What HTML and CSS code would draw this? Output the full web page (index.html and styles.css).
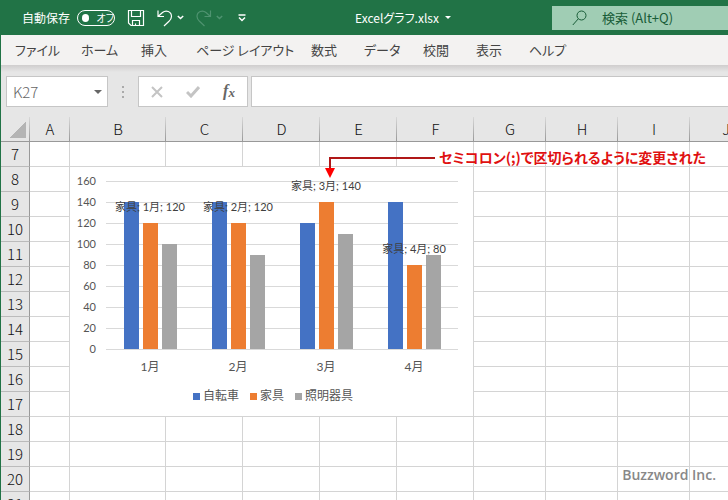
FILE: index.html
```html
<!DOCTYPE html>
<html lang="ja">
<head>
  <meta charset="UTF-8">
  <title>Excelグラフ.xlsx</title>
  <link rel="stylesheet" href="styles.css">
</head>
<body>
  <header class="titlebar">
    <label class="autosave">自動保存
      <span class="toggle"><input type="checkbox"><span class="knob"></span><span class="state">オフ</span></span>
    </label>
    <div class="quick">
      <button aria-label="上書き保存">
        <svg width="18" height="18" viewBox="0 0 18 18"><path d="M1.5 1.5h15v15H4L1.500 14zM4.500 1.500v6h9v-6M5.500 16.500v-5h7v5M8.500 16.500v-2"/></svg>
      </button>
      <button aria-label="元に戻す">
        <svg width="16" height="18" viewBox="0 0 16 18"><path d="M1 1.500v6h6M1 7.500L5.500 3.500C9 .5 14.500 2.500 14.500 7.500c0 2-1 3.300-2.500 4.800L7 17"/></svg>
        <svg class="chev" width="7" height="5" viewBox="0 0 7 5"><path d="M.8 1l2.700 2.500L6.200 1"/></svg>
      </button>
      <button class="off" aria-label="やり直し" disabled>
        <svg width="16" height="18" viewBox="0 0 16 18"><path d="M14.500 1.500v6h-6M14.500 7.500L10 3.500C6.500 .5 1 2.500 1 7.500c0 2 1 3.300 2.500 4.800L8.500 17"/></svg>
        <svg class="chev" width="7" height="5" viewBox="0 0 7 5"><path d="M.8 1l2.700 2.500L6.200 1"/></svg>
      </button>
      <button aria-label="カスタマイズ">
        <svg class="chev" width="8" height="8" viewBox="0 0 8 8"><path d="M.5 1h7M1 3.500l3 3 3-3"/></svg>
      </button>
    </div>
    <button class="filename">Excelグラフ.xlsx <span class="caret"></span></button>
    <div class="search">
      <svg width="15" height="16" viewBox="0 0 15 16"><circle cx="9.500" cy="5.500" r="4.500"/><path d="M6.300 8.800L.8 15"/></svg>
      <input type="text" placeholder="検索 (Alt+Q)" aria-label="検索">
    </div>
  </header>

  <nav class="tabs">
    <a href="#">ファイル</a>
    <a href="#">ホーム</a>
    <a href="#">挿入</a>
    <a href="#">ページ レイアウト</a>
    <a href="#">数式</a>
    <a href="#">データ</a>
    <a href="#">校閲</a>
    <a href="#">表示</a>
    <a href="#">ヘルプ</a>
  </nav>

  <div class="formulabar">
    <div class="namebox">
      <input type="text" value="K27" aria-label="名前ボックス">
      <span class="caret"></span>
    </div>
    <span class="dots"><i></i><i></i><i></i></span>
    <div class="fxbuttons">
      <button aria-label="キャンセル"><svg width="12" height="12" viewBox="0 0 12 12"><path d="M1 1l10 10M11 1L1 11"/></svg></button>
      <button aria-label="入力"><svg width="14" height="12" viewBox="0 0 14 12"><path class="thick" d="M1 6l4 4 8-9"/></svg></button>
      <button class="fx" aria-label="関数の挿入">f<sub>x</sub></button>
    </div>
    <input class="formula" type="text" aria-label="数式バー">
  </div>

  <main class="sheet">
    <table class="cells">
      <colgroup>
        <col class="rowhead"><col class="narrow"><col class="wide">
        <col class="mid"><col class="mid"><col class="mid"><col class="mid">
        <col class="base"><col class="base"><col class="base"><col class="base">
      </colgroup>
      <thead>
        <tr><th class="corner"></th><th>A</th><th>B</th><th>C</th><th>D</th><th>E</th><th>F</th><th>G</th><th>H</th><th>I</th><th>J</th></tr>
      </thead>
      <tbody>
        <tr><th>7</th><td></td><td></td><td></td><td></td><td></td><td></td><td></td><td></td><td></td><td></td></tr>
        <tr><th>8</th><td></td><td></td><td></td><td></td><td></td><td></td><td></td><td></td><td></td><td></td></tr>
        <tr><th>9</th><td></td><td></td><td></td><td></td><td></td><td></td><td></td><td></td><td></td><td></td></tr>
        <tr><th>10</th><td></td><td></td><td></td><td></td><td></td><td></td><td></td><td></td><td></td><td></td></tr>
        <tr><th>11</th><td></td><td></td><td></td><td></td><td></td><td></td><td></td><td></td><td></td><td></td></tr>
        <tr><th>12</th><td></td><td></td><td></td><td></td><td></td><td></td><td></td><td></td><td></td><td></td></tr>
        <tr><th>13</th><td></td><td></td><td></td><td></td><td></td><td></td><td></td><td></td><td></td><td></td></tr>
        <tr><th>14</th><td></td><td></td><td></td><td></td><td></td><td></td><td></td><td></td><td></td><td></td></tr>
        <tr><th>15</th><td></td><td></td><td></td><td></td><td></td><td></td><td></td><td></td><td></td><td></td></tr>
        <tr><th>16</th><td></td><td></td><td></td><td></td><td></td><td></td><td></td><td></td><td></td><td></td></tr>
        <tr><th>17</th><td></td><td></td><td></td><td></td><td></td><td></td><td></td><td></td><td></td><td></td></tr>
        <tr><th>18</th><td></td><td></td><td></td><td></td><td></td><td></td><td></td><td></td><td></td><td></td></tr>
        <tr><th>19</th><td></td><td></td><td></td><td></td><td></td><td></td><td></td><td></td><td></td><td></td></tr>
        <tr><th>20</th><td></td><td></td><td></td><td></td><td></td><td></td><td></td><td></td><td></td><td></td></tr>
        <tr><th>21</th><td></td><td></td><td></td><td></td><td></td><td></td><td></td><td></td><td></td><td></td></tr>
      </tbody>
    </table>

    <!-- chart floats over the cells -->
    <section class="chart">
      <div class="axis">
        <span>160</span><span>140</span><span>120</span><span>100</span><span>80</span><span>60</span><span>40</span><span>20</span><span>0</span>
      </div>
      <div class="plot">
        <div class="group">
          <div class="bar blue" style="height: 87.5%"></div>
          <div class="bar orange" style="height: 75%"><span class="value">家具; 1月; 120</span></div>
          <div class="bar gray" style="height: 62.5%"></div>
        </div>
        <div class="group">
          <div class="bar blue" style="height: 87.5%"></div>
          <div class="bar orange" style="height: 75%"><span class="value">家具; 2月; 120</span></div>
          <div class="bar gray" style="height: 56.25%"></div>
        </div>
        <div class="group">
          <div class="bar blue" style="height: 75%"></div>
          <div class="bar orange" style="height: 87.5%"><span class="value">家具; 3月; 140</span></div>
          <div class="bar gray" style="height: 68.75%"></div>
        </div>
        <div class="group">
          <div class="bar blue" style="height: 87.5%"></div>
          <div class="bar orange" style="height: 50%"><span class="value">家具; 4月; 80</span></div>
          <div class="bar gray" style="height: 56.25%"></div>
        </div>
      </div>
      <div class="months">
        <span>1月</span><span>2月</span><span>3月</span><span>4月</span>
      </div>
      <div class="legend">
        <span><i class="blue"></i>自転車</span>
        <span><i class="orange"></i>家具</span>
        <span><i class="gray"></i>照明器具</span>
      </div>
    </section>

    <div class="note">
      <svg width="112" height="24" viewBox="0 0 112 24"><path class="line" d="M111 3H6v12"/><path class="head" d="M1 13h10L6 23z"/></svg>
      <span>セミコロン(;)で区切られるように変更された</span>
    </div>

    <p class="credit">Buzzword Inc.</p>
  </main>
</body>
</html>
```
FILE: styles.css
```css
* {
  box-sizing: border-box;
}
body {
  margin: 0;
  height: 100vh;
  overflow: hidden;
  display: flex;
  flex-direction: column;
  border-left: 1px solid #217346;
  background: #e6e6e6;
  color: #444;
  font-family: "Noto Sans CJK JP", sans-serif;
  font-feature-settings: "palt";
  font-size: 13px;
}
button, input {
  font: inherit;
  font-feature-settings: inherit;
  color: inherit;
  border: 0;
  padding: 0;
  background: none;
}
svg {
  fill: none;
  stroke: currentColor;
}
.caret {
  border: 4px solid transparent;
  border-top-color: currentColor;
  border-bottom: 0;
}

/* title bar */
.titlebar {
  flex: none;
  display: flex;
  align-items: center;
  height: 35px;
  padding-left: 21px;
  background: #217346;
  color: #fff;
  font-size: 13px;
  white-space: nowrap;
}
.autosave {
  display: flex;
  align-items: center;
  gap: 7px;
  font-size: 12px;
}
.toggle {
  display: flex;
  align-items: center;
  gap: 7px;
  width: 38px;
  height: 16px;
  padding-left: 4px;
  border: 1px solid #fff;
  border-radius: 8px;
  font-size: 10px;
}
.toggle input {
  position: absolute;
  opacity: 0;
}
.knob {
  width: 8px;
  height: 8px;
  border-radius: 50%;
  background: #fff;
}
.quick {
  display: flex;
  gap: 12px;
  margin-left: 12px;
}
.quick button {
  display: flex;
  align-items: center;
  gap: 4px;
}
.quick svg {
  stroke-width: 1.2;
}
.quick .chev {
  stroke-width: 1.5;
}
.quick .off {
  color: #4f9370;
}
.quick button:last-child {
  margin-left: 3px;
}
.filename {
  display: flex;
  align-items: center;
  gap: 6px;
  margin-left: 109px;
  font-size: 12px;
}
.filename .caret {
  border-width: 3px;
  border-bottom: 0;
}
.search {
  display: flex;
  align-items: center;
  gap: 15px;
  width: 176px;
  height: 24px;
  margin-left: auto;
  padding-left: 20px;
  background: #a0cdb4;
  color: #185c37;
}
.search input {
  width: 100px;
}
.search input::placeholder {
  color: #185c37;
  opacity: 1;
}

/* ribbon tabs */
.tabs {
  flex: none;
  display: grid;
  grid-template-columns: 66px 60px 55px 115px 53px 59px 53px 53px auto;
  height: 30px;
  padding-left: 14px;
  background: #f3f2f1;
  line-height: 30px;
  white-space: nowrap;
}
.tabs a {
  color: #444;
  text-decoration: none;
}

/* formula bar */
.formulabar {
  flex: none;
  display: flex;
  height: 52px;
  padding: 11px 0 10px 5px;
  background: linear-gradient(#cfcdcd, #e6e6e6 7px);
}
.namebox, .fxbuttons, .formula {
  border: 1px solid #c6c6c6;
  background: #fff;
}
.namebox {
  display: flex;
  align-items: center;
  width: 102px;
  padding: 0 5px 0 6px;
  color: #666;
}
.namebox input {
  flex: 1;
  min-width: 0;
  font-size: 15px;
  font-weight: 300;
}
.dots {
  display: flex;
  flex-direction: column;
  justify-content: center;
  align-items: center;
  gap: 3px;
  width: 30px;
}
.dots i {
  width: 2px;
  height: 2px;
  background: #aaa;
}
.fxbuttons {
  display: flex;
  width: 110px;
  color: #c4c4c4;
}
.fxbuttons button {
  flex: 1;
}
.fxbuttons svg {
  display: block;
  margin: 0 auto;
  stroke-width: 2;
}
.fxbuttons .thick {
  stroke-width: 3;
}
.fxbuttons .fx {
  color: #666;
  font: italic bold 16px "Liberation Serif", serif;
}
.fx sub {
  font-size: 13px;
  vertical-align: -1px;
}
.formula {
  flex: 1;
  min-width: 0;
  margin-left: 3px;
  border-right: 0;
}

/* sheet */
.sheet {
  position: relative;
  flex: 1;
  overflow: hidden;
}
.cells {
  width: 733px;
  table-layout: fixed;
  border-collapse: separate;
  border-spacing: 0;
  background: #fff;
}
.rowhead {
  width: 29px;
}
.narrow {
  width: 40px;
}
.wide {
  width: 96px;
}
.mid {
  width: 77px;
}
.base {
  width: 72px;
}
.cells th, .cells td {
  height: 25px;
  padding: 0;
  border: solid #d4d4d4;
  border-width: 0 1px 1px 0;
}
.cells th {
  background: #e6e6e6;
  color: #111;
  font-size: 15px;
  font-weight: 300;
  line-height: 24px;
}
.cells thead th {
  border-bottom-color: #999;
  border-right: 0;
  background: linear-gradient(#d8d8d8, #999) right / 1px 100% no-repeat #e6e6e6;
}
.cells tbody th {
  border-right-color: #999;
  border-bottom-color: #bbb;
}
.cells thead .corner {
  background:
    linear-gradient(#d8d8d8, #999) right / 1px 100% no-repeat,
    linear-gradient(135deg, transparent 50%, #b4b4b4 50%) 8px 4px / 17px 17px no-repeat #e6e6e6;
}

/* chart */
.chart {
  position: absolute;
  left: 68px;
  top: 49px;
  display: grid;
  grid-template-columns: 26px 352px;
  grid-template-rows: 169px 34px 24px;
  column-gap: 10px;
  width: 405px;
  height: 251px;
  padding-top: 14px;
  border: 1px solid #d4d4d4;
  background: #fff;
  color: #555;
  font-family: Lato, "Noto Sans CJK JP", sans-serif;
  font-size: 11px;
}
.axis {
  display: flex;
  flex-direction: column;
  margin-top: -11px;
  text-align: right;
  line-height: 21px;
}
.plot {
  display: flex;
  border-bottom: 1px solid #d9d9d9;
  background: repeating-linear-gradient(#d9d9d9 0 1px, transparent 1px 21px);
}
.group {
  flex: 1;
  display: flex;
  align-items: flex-end;
  justify-content: center;
  gap: 4px;
}
.bar {
  position: relative;
  width: 15px;
}
.blue {
  background: #4472c4;
}
.orange {
  background: #ed7d31;
}
.gray {
  background: #a5a5a5;
}
.value {
  position: absolute;
  z-index: 1;
  left: 50%;
  bottom: 100%;
  transform: translateX(-50%);
  padding-bottom: 8px;
  color: #404040;
  line-height: 16px;
  white-space: nowrap;
}
.months {
  grid-column: 2;
  display: flex;
  font-size: 12px;
  line-height: 34px;
}
.months span {
  flex: 1;
  text-align: center;
}
.legend {
  grid-column: 1 / 3;
  display: flex;
  justify-content: center;
  gap: 11px;
  padding-left: 18px;
  font-size: 12px;
  line-height: 24px;
}
.legend span {
  display: flex;
  align-items: center;
  gap: 3px;
}
.legend i {
  width: 7px;
  height: 7px;
}

/* callout */
.note {
  position: absolute;
  left: 323px;
  top: 29px;
  display: flex;
  gap: 3px;
  color: #e01010;
  font-size: 14px;
  font-weight: bold;
  line-height: 22px;
  white-space: nowrap;
}
.note svg {
  margin-top: 9px;
}
.note .line {
  stroke: #b01818;
  stroke-width: 2;
}
.note .head {
  fill: #f00;
  stroke: none;
}
.credit {
  position: absolute;
  right: 12px;
  bottom: 15px;
  margin: 0;
  color: #888;
  font: 600 14px/20px "Open Sans", sans-serif;
}
```
